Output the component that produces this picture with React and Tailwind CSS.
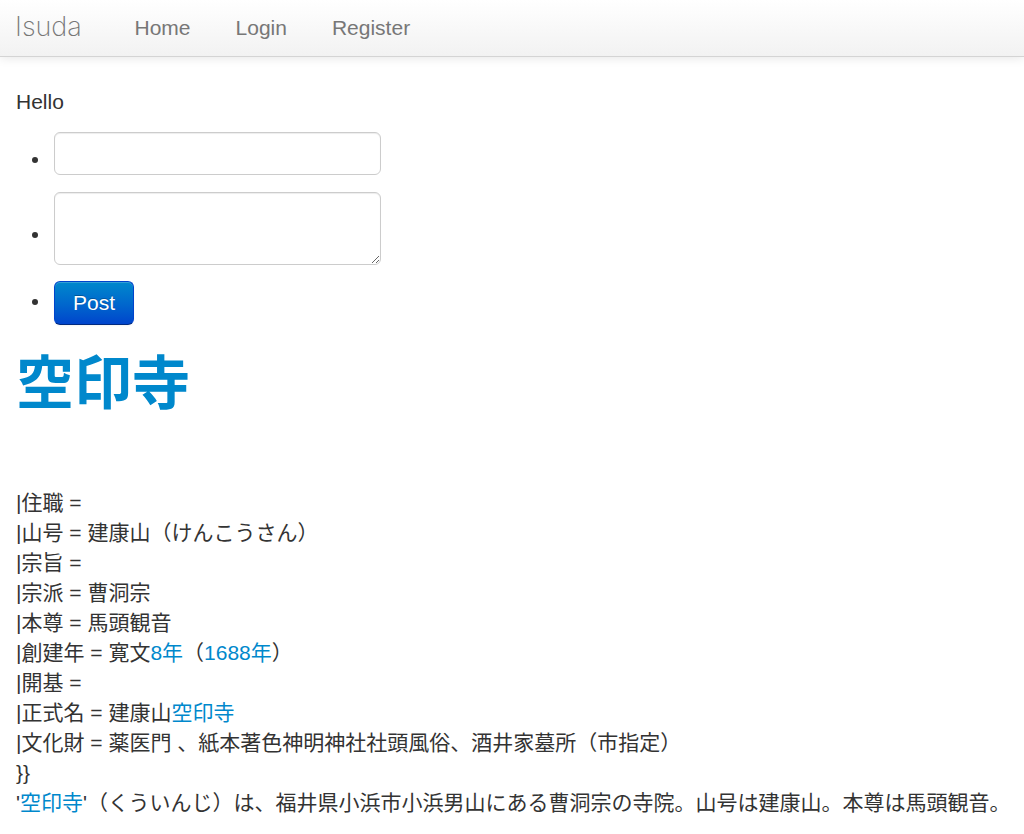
export default function App() {
  const sans = { fontFamily: '"Liberation Sans", "Noto Sans CJK JP", sans-serif' };
  const lines = [
    <>|住職 =</>,
    <>|山号 = 建康山（けんこうさん）</>,
    <>|宗旨 =</>,
    <>|宗派 = 曹洞宗</>,
    <>|本尊 = 馬頭観音</>,
    <>|創建年 = 寛文<a className="text-[#0088cc]" href="#">8年</a>（<a className="text-[#0088cc]" href="#">1688年</a>）</>,
    <>|開基 =</>,
    <>|正式名 = 建康山<a className="text-[#0088cc]" href="#">空印寺</a></>,
    <>|文化財 = 薬医門 、紙本著色神明神社社頭風俗、酒井家墓所（市指定）</>,
    <>{"}}"}</>,
    <>'<a className="text-[#0088cc]" href="#">空印寺</a>'（くういんじ）は、福井県小浜市小浜男山にある曹洞宗の寺院。山号は建康山。本尊は馬頭観音。</>,
  ];
  return (
    <div className="min-h-[834px] bg-white text-[#333] text-[21px] leading-[30px]" style={sans}>
      <div className="h-[57px] bg-gradient-to-b from-white to-[#f2f2f2] border-b border-[#d4d4d4] shadow-[0_1px_10px_rgba(0,0,0,0.1)] flex items-center">
        <a href="#" className="ml-[15px] w-[97px] text-[27px] leading-[30px] text-[#777] font-[200] -mt-[2px]" style={{ fontFamily: '"Helvetica Neue", Inter, sans-serif' }}>Isuda</a>
        <a href="#" className="px-[22.5px] text-[#777]">Home</a>
        <a href="#" className="px-[22.5px] text-[#777]">Login</a>
        <a href="#" className="px-[22.5px] text-[#777]">Register</a>
      </div>
      <div className="pl-4 pt-[30px]">
        <p className="mb-[15px]">Hello</p>
        <ul className="flex flex-col">
          <li className="flex items-start">
            <span className="w-[6px] h-[6px] rounded-full bg-[#333] ml-4 mr-[16px] mt-[25px]" />
            <input className="w-[327px] h-[43px] border border-[#ccc] rounded-[6px] shadow-[inset_0_1px_1px_rgba(0,0,0,0.075)] px-2 outline-none" />
          </li>
          <li className="flex items-start mt-[17px]">
            <span className="w-[6px] h-[6px] rounded-full bg-[#333] ml-4 mr-[16px] mt-[40px]" />
            <textarea className="w-[327px] h-[73px] border border-[#ccc] rounded-[6px] shadow-[inset_0_1px_1px_rgba(0,0,0,0.075)] px-2 outline-none block" />
          </li>
          <li className="flex items-start mt-[16px]">
            <span className="w-[6px] h-[6px] rounded-full bg-[#333] ml-4 mr-[16px] mt-[18px]" />
            <button className="w-[80px] h-[44px] rounded-[6px] bg-gradient-to-b from-[#0088cc] to-[#0044cc] border border-[#0044cc] border-b-[#002a80] text-white text-[21px] [text-shadow:0_-1px_0_rgba(0,0,0,0.25)] shadow-[inset_0_1px_0_rgba(255,255,255,0.2),0_1px_2px_rgba(0,0,0,0.05)]">Post</button>
          </li>
        </ul>
        <h1 className="mt-[29px] text-[58px] leading-[60px] font-bold text-[#0088cc]" style={{ fontFamily: '"Liberation Sans", "Noto Sans CJK JP", sans-serif' }}>
          <a href="#">空印寺</a>
        </h1>
        <div className="mt-[74px]">
          {lines.map((l, i) => (
            <div key={i}>{l}</div>
          ))}
        </div>
      </div>
    </div>
  );
}
